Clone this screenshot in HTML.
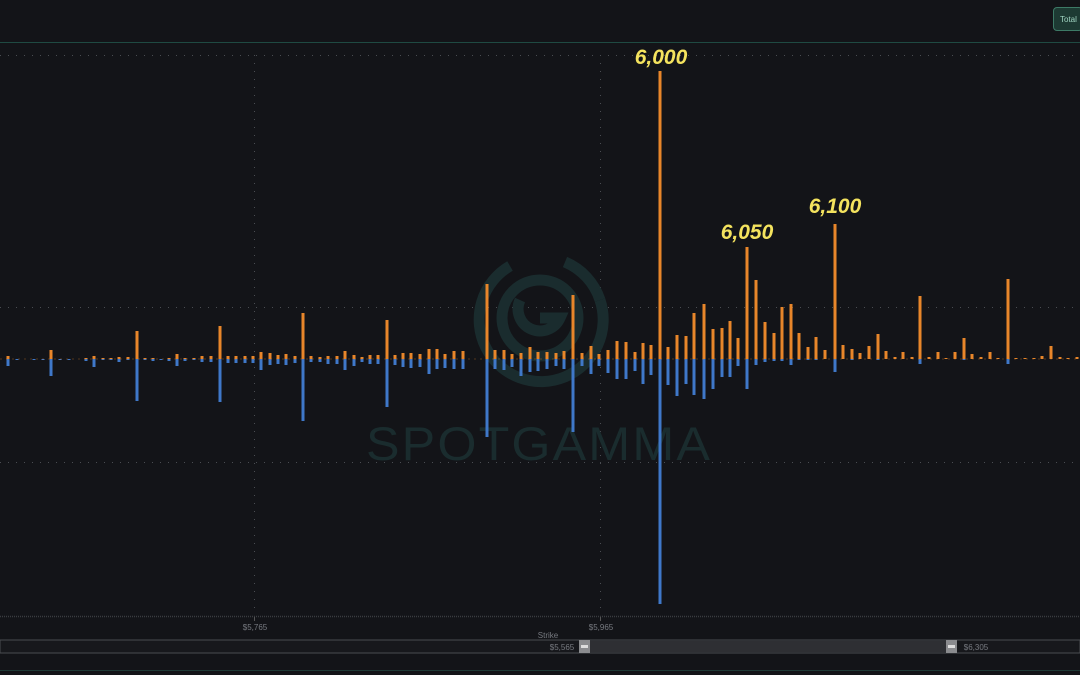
<!DOCTYPE html>
<html><head><meta charset="utf-8"><style>
html,body{margin:0;padding:0;background:#131418;width:1080px;height:675px;overflow:hidden;font-family:"Liberation Sans",sans-serif}
svg{position:absolute;left:0;top:0}
.btn{position:absolute;left:1053px;top:7px;width:30px;height:24px;border:1px solid #3d7a66;border-radius:4px;background:#1d3a33;color:#9fd3c0;font-size:8px;line-height:24px;padding-left:6px;box-sizing:border-box}
</style></head><body>
<svg id="s" width="1080" height="675" xmlns="http://www.w3.org/2000/svg">
<line x1="0" y1="42.5" x2="1080" y2="42.5" stroke="#1f4a42" stroke-width="1"/>
<g stroke="#4a4d52" stroke-width="1" stroke-dasharray="1 7">
<line x1="0" y1="55.5" x2="1080" y2="55.5"/>
<line x1="0" y1="307.5" x2="1080" y2="307.5"/>
<line x1="0" y1="462.5" x2="1080" y2="462.5"/>
<line x1="254.5" y1="55" x2="254.5" y2="615"/>
<line x1="600.5" y1="55" x2="600.5" y2="615"/>
</g>
<line x1="0" y1="616.5" x2="1080" y2="616.5" stroke="#3a3c40" stroke-width="1.5" stroke-dasharray="1 1"/>
<line x1="254.5" y1="617" x2="254.5" y2="621" stroke="#555"/>
<line x1="600.5" y1="617" x2="600.5" y2="621" stroke="#555"/>
<g fill="none" stroke="#1a2c2e" stroke-width="11">
<path d="M510 266 A62 62 0 1 0 600 300"/>
<path d="M565 262 A62 62 0 0 1 600 300"/>
<circle cx="540" cy="318" r="38"/>
<path d="M520 300 A20 20 0 1 0 560 318 L540 318"/>
</g>
<text x="366" y="460" font-size="47" fill="#1a2c2e" font-family="Liberation Sans,sans-serif" textLength="346" lengthAdjust="spacingAndGlyphs" letter-spacing="2">SPOTGAMMA</text>
<g id="bars"></g>
<line x1="0" y1="359" x2="1080" y2="359" stroke="#e8862a" stroke-width="0.6" stroke-dasharray="2 4" opacity="0.6"/>
<g font-family="Liberation Sans,sans-serif" font-size="21" font-weight="bold" font-style="italic" fill="#f4e35e" text-anchor="middle">
<text x="661" y="64">6,000</text>
<text x="747" y="239">6,050</text>
<text x="835" y="213">6,100</text>
</g>
<rect x="0" y="640" width="1080" height="13" fill="#17181c" stroke="#4a4c50" stroke-width="1"/>
<rect x="584" y="641" width="368" height="11" fill="#2e2f33"/>
<rect x="579" y="640" width="11" height="13" fill="#8a8b8e"/><rect x="581" y="645" width="7" height="3" fill="#ddd"/>
<rect x="946" y="640" width="11" height="13" fill="#8a8b8e"/><rect x="948" y="645" width="7" height="3" fill="#ddd"/>
<g font-size="8" fill="#777a80" text-anchor="middle">
<text x="255" y="630">$5,765</text>
<text x="601" y="630">$5,965</text>
<text x="548" y="638">Strike</text>
<text x="562" y="650">$5,565</text>
<text x="976" y="650">$6,305</text>
</g>
<line x1="0" y1="670.5" x2="1080" y2="670.5" stroke="#1f3a36"/>
</svg>
<div class="btn">Total</div>
<script>
var d=[[8,3,7],[17,0,1],[26,0,0],[34,0,1],[43,0,1],[51,9,17],[60,0,1],[69,0,1],[77,0,0],[86,1,2],[94,3,8],[103,1,1],[111,1,1],[119,2,3],[128,2,1],[137,28,42],[145,1,1],[153,1,2],[161,0,1],[169,1,2],[177,5,7],[185,1,2],[194,1,1],[202,3,3],[211,3,3],[220,33,43],[228,3,4],[236,3,4],[245,3,4],[253,3,4],[261,7,11],[270,6,6],[278,4,5],[286,5,6],[295,3,4],[303,46,62],[311,3,3],[320,2,3],[328,3,5],[337,3,5],[345,8,11],[354,4,7],[362,2,3],[370,4,5],[378,4,5],[387,39,48],[395,4,6],[403,6,8],[411,6,9],[420,5,8],[429,10,15],[437,10,10],[445,5,9],[454,8,10],[463,8,10],[487,75,78],[495,9,10],[504,9,11],[512,5,8],[521,6,17],[530,12,13],[538,7,12],[547,7,10],[556,6,7],[564,8,10],[573,64,73],[582,6,7],[591,13,15],[599,5,7],[608,9,14],[617,18,20],[626,17,20],[635,7,12],[643,16,25],[651,14,16],[660,288,245],[668,12,26],[677,24,37],[686,23,25],[694,46,36],[704,55,40],[713,30,30],[722,31,18],[730,38,18],[738,21,7],[747,112,30],[756,79,6],[765,37,3],[774,26,2],[782,52,2],[791,55,6],[799,26,1],[808,12,1],[816,22,1],[825,9,0],[835,135,13],[843,14,0],[852,10,1],[860,6,0],[869,13,0],[878,25,1],[886,8,0],[895,2,0],[903,7,0],[912,2,0],[920,63,5],[929,2,0],[938,7,0],[946,1,0],[955,7,0],[964,21,1],[972,5,0],[981,2,0],[990,7,0],[998,1,0],[1008,80,5],[1016,1,0],[1025,1,0],[1034,1,0],[1042,3,0],[1051,13,0],[1060,2,0],[1068,1,0],[1077,2,0]];
var s='';d.forEach(function(b){var x=b[0]-1.5;if(b[1]>0)s+='<rect x="'+x+'" y="'+(359-b[1])+'" width="3" height="'+b[1]+'" fill="#e8862a"/>';if(b[2]>0)s+='<rect x="'+x+'" y="359" width="3" height="'+b[2]+'" fill="#3f78c9"/>';});
document.getElementById('bars').innerHTML=s;
</script>
</body></html>
